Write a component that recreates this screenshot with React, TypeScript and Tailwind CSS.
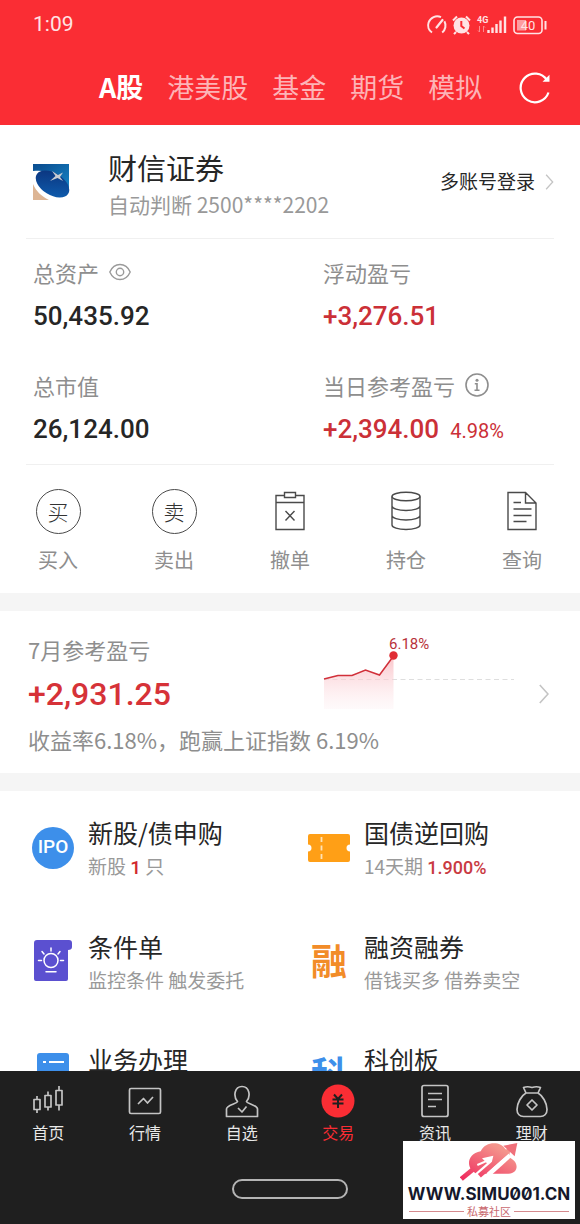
import { useState } from "react";
import type { ReactNode } from "react";

const markets = ["A股", "港美股", "基金", "期货", "模拟"];

function StatusIcons() {
    return (
        <svg width="122" height="22" viewBox="0 0 122 22" fill="none" stroke="#ffe3e4" aria-hidden="true">
            {/* speed meter */}
            <path d="M6 18.500A8.600 8.600 0 0 1 2.600 8.500 9 9 0 0 1 15 3.200M18.400 7.200a9 9 0 0 1-2.200 11.300" strokeWidth="2" />
            <path d="M10.500 13.500 16.500 6" strokeWidth="2.200" strokeLinecap="round" />
            {/* alarm */}
            <circle cx="35.500" cy="11.500" r="8" fill="#ffe3e4" stroke="none" />
            <path d="m27 6.500 4-4M44 6.500l-4-4M30 18l-2 2.200M41 18l2 2.200" strokeWidth="2" />
            <path d="M35.300 7v5l3.200 2.500" stroke="#fa2d34" strokeWidth="2" />
            {/* signal */}
            <text x="51" y="9" fontSize="9" fontWeight="700" fill="#ffe3e4" stroke="none" fontFamily="Roboto, sans-serif">4G</text>
            <path d="M53.500 12v6m-1.500-1.500 1.500 1.500M57.500 18v-6m1.500 1.500-1.500-1.500" stroke="#fc8a8e" strokeWidth="1" />
            <path d="M62.500 19v-3M66.500 19v-5.500M70.500 19v-9M74.500 19V6.500M79 19V2.500" strokeWidth="2.400" />
            {/* battery */}
            <rect x="88" y="3" width="28" height="16.500" rx="3.500" strokeWidth="1.600" />
            <rect x="91" y="6" width="9" height="10.500" fill="#fd9da0" stroke="none" />
            <path d="M119.500 7v8.500" strokeWidth="2" />
            <text x="102" y="16" textAnchor="middle" fontSize="13" fill="#ffe3e4" stroke="none" fontFamily="Roboto, sans-serif">40</text>
        </svg>
    );
}

function RefreshIcon() {
    return (
        <svg width="32" height="32" viewBox="0 0 32 32" fill="none" stroke="#fff" strokeWidth="2.200">
            <path d="M29.500 20.500A14.300 14.300 0 1 1 28 8.200" />
            <path d="M30.500 2.800v7h-7z" fill="#fff" stroke="none" />
        </svg>
    );
}

function Chevron({ className }: { className: string }) {
    return (
        <svg className={className} viewBox="0 0 10 20" fill="none" stroke="#c4c4c4" strokeWidth="1.600" aria-hidden="true">
            <path d="m.8 1 8.200 9-8.200 9" />
        </svg>
    );
}

function BrokerLogo() {
    return (
        <svg width="38" height="36" viewBox="0 0 38 36" aria-hidden="true">
            <defs>
                <linearGradient id="sky" x1="0" y1="0" x2="1" y2="1">
                    <stop offset="0" stopColor="#0a4d90" />
                    <stop offset="1" stopColor="#1683c4" />
                </linearGradient>
                <linearGradient id="orb" x1="0" y1="0" x2="1" y2="1">
                    <stop offset="0" stopColor="#0b2f78" />
                    <stop offset="1" stopColor="#0f62b4" />
                </linearGradient>
            </defs>
            <path d="M0 0h36v24H0z" fill="url(#sky)" />
            <path d="M0 7C14 5 28 11 36 26v10H0z" fill="#fff" />
            <path d="M0 20c3 7 8 12 16 16H0z" fill="#ddb594" />
            <path d="M36 0v24C32 11 18 5 8 7L6 0z" fill="url(#sky)" />
            <ellipse cx="19.500" cy="20" rx="18.500" ry="11" transform="rotate(32 19.500 20)" fill="url(#orb)" />
            <path d="m19 7 6 4 5-2.500-3 4.500 3 4-5.500-3-7.500 3 5.500-5z" fill="#c9ccd2" />
        </svg>
    );
}

function EyeIcon() {
    return (
        <svg width="22" height="18" viewBox="0 0 22 18" fill="none" stroke="#9a9a9a" strokeWidth="1.400">
            <path d="M.8 9C3 4 6.500 1.500 11 1.500S19 4 21.200 9C19 14 15.500 16.500 11 16.500S3 14 .8 9z" />
            <circle cx="11" cy="9" r="3.700" />
        </svg>
    );
}

function InfoIcon() {
    return (
        <svg width="24" height="24" viewBox="0 0 24 24" fill="none" stroke="#8e8e8e" strokeWidth="1.600">
            <circle cx="12" cy="12" r="11" />
            <circle cx="12" cy="7.200" r="1.500" fill="#8e8e8e" stroke="none" />
            <path d="M9.800 10.800H12v6.500M9.500 17.300h5" />
        </svg>
    );
}

function RoundGlyph({ children }: { children: ReactNode }) {
    return (
        <span className="flex size-[45px] items-center justify-center rounded-full border border-[#4a4a4a] text-[21px] leading-none font-light text-[#333]">
            {children}
        </span>
    );
}

const actions = [
    { label: "买入", icon: <RoundGlyph>买</RoundGlyph> },
    { label: "卖出", icon: <RoundGlyph>卖</RoundGlyph> },
    {
        label: "撤单",
        icon: (
            <svg width="30" height="40" viewBox="0 0 30 40" fill="none" stroke="#4a4a4a" strokeWidth="1.400">
                <path d="M9.500 4.500H1v34h28v-34h-8.500M1 11.500h28" />
                <path d="M9.500 1.500h11v5h-11zM10.500 20l9 9.500M19.500 20l-9 9.500" />
            </svg>
        ),
    },
    {
        label: "持仓",
        icon: (
            <svg width="30" height="40" viewBox="0 0 30 40" fill="none" stroke="#4a4a4a" strokeWidth="1.400">
                <ellipse cx="15" cy="5.500" rx="14" ry="4.200" />
                <path d="M1 5.500V34c0 2.500 6 4.500 14 4.500S29 36.500 29 34V5.500M1 15c0 2.500 6 4.500 14 4.500S29 17.500 29 15M1 24.500C1 27 7 29 15 29s14-2 14-4.500" />
            </svg>
        ),
    },
    {
        label: "查询",
        icon: (
            <svg width="30" height="40" viewBox="0 0 30 40" fill="none" stroke="#4a4a4a" strokeWidth="1.400">
                <path d="M18.500 1.500H1v37h28V12zv10.500H29M6.500 11.500H14M6.500 18h18M6.500 24.500h18M6.500 30.500h13" />
            </svg>
        ),
    },
];

const services = [
    {
        title: "新股/债申购",
        note: <>新股 <b className="font-['Roboto',sans-serif] font-medium text-[#d1282e]">1</b> 只</>,
        icon: (
            <span className="flex size-[42px] items-center justify-center rounded-full bg-[#3d8fea] font-['Roboto',sans-serif] text-[19px] font-medium text-white">
                IPO
            </span>
        ),
    },
    {
        title: "国债逆回购",
        note: <>14天期 <b className="font-['Roboto',sans-serif] text-[18px] font-medium text-[#c93a42]">1.900%</b></>,
        icon: (
            <svg width="42" height="28" viewBox="0 0 42 28" aria-hidden="true">
                <path d="M2 0h38q2 0 2 2v8.500a3.500 3.500 0 0 0 0 7V26q0 2-2 2H2q-2 0-2-2v-8.500a3.500 3.500 0 0 0 0-7V2q0-2 2-2z" fill="#ff9f16" />
                <path d="M13.500 3v22" stroke="#ffe2b5" strokeWidth="1.800" strokeDasharray="5 3.500" />
            </svg>
        ),
    },
    {
        title: "条件单",
        note: "监控条件 触发委托",
        icon: (
            <svg width="38" height="42" viewBox="0 0 38 42" fill="none" stroke="#fff" strokeWidth="1.500" strokeLinecap="round" aria-hidden="true">
                <path d="M3 0h32q3 0 3 3v4q0 3-4 3v29q0 2-2 2H2q-2 0-2-2V3q0-3 3-3z" fill="#5b50d0" stroke="none" />
                <circle cx="17" cy="20.500" r="7" />
                <path d="M17 8v3M8 11.500l2 2.500M26 11.500 24 14M4.500 20.500h3M26.500 20.500h3M12 31.700h10" />
            </svg>
        ),
    },
    {
        title: "融资融券",
        note: "借钱买多 借券卖空",
        icon: <span className="pb-1 text-[36px] leading-none font-bold text-[#f28c28]">融</span>,
    },
    {
        title: "业务办理",
        icon: (
            <svg width="32" height="42" viewBox="0 0 32 42" stroke="#fff" strokeWidth="2" aria-hidden="true">
                <rect width="32" height="42" rx="3" fill="#3d8fea" stroke="none" />
                <path d="M6 9h3M12 9h15M6 20h3M12 20h15M6 31h3M12 31h15" />
            </svg>
        ),
    },
    {
        title: "科创板",
        icon: <span className="pb-1 text-[36px] leading-none font-bold text-[#3d8fea]">科</span>,
    },
];

const navItems = [
    {
        label: "首页",
        icon: (
            <>
                <path d="M3 15.500h6v10H3zM14 11.500h6v11.500h-6zM25 6.500h6V21h-6z" />
                <path d="M6 12v3.500M6 25.500V29M17 7.500v4M17 23v3.500M28 2v4.500M28 21v5.500" />
            </>
        ),
    },
    {
        label: "行情",
        icon: (
            <>
                <rect x="1.500" y="4.500" width="31" height="25" rx="1.500" />
                <path d="m10 20 5.500-5.500 4 4.500 5.500-6" />
            </>
        ),
    },
    {
        label: "自选",
        icon: (
            <>
                <path d="M12.500 17.500C8 12 9.500 2.500 17 2.500S26 12 21.500 17.500c1 2.500 11 3.500 11 7.500v7.500h-31V25c0-4 10-5 11-7.500z" />
                <path d="m13 24 4 4 4.500-5.500" />
            </>
        ),
    },
    {
        label: "交易",
        icon: (
            <>
                <circle cx="17" cy="17" r="16.500" fill="#fa2d34" stroke="none" />
                <path d="m13 10.500 4 4.500 4-4.500M11.500 15.500h11M11.500 19.500h11M17 15v9" stroke="#1f1f1f" strokeWidth="2" />
            </>
        ),
    },
    {
        label: "资讯",
        icon: (
            <>
                <rect x="4" y="1.500" width="26" height="31" rx="2" />
                <path d="M10 9.500h14M10 15.500h14M10 22.500h8" />
            </>
        ),
    },
    {
        label: "理财",
        icon: (
            <>
                <path d="M11 9 8.500 3.500q4-1.500 8.500 0 4.500-1.500 8.500 0L23 9zC6.500 11.500 2 19 2 25.500c0 4.500 3 7 6.500 7h17c3.500 0 6.500-2.500 6.500-7C32 19 27.500 11.500 23 9" />
                <path d="m17 16 5 5-5 5-5-5z" />
            </>
        ),
    },
];

function TrendChart() {
    return (
        <svg width="200" height="82" viewBox="0 0 200 82" fill="none" className="shrink-0" role="img" aria-label="7月收益走势">
            <defs>
                <linearGradient id="fade" x1="0" y1="0" x2="0" y2="1">
                    <stop offset="0" stopColor="#f9b6bc" stopOpacity="0.8" />
                    <stop offset="1" stopColor="#fdeef1" stopOpacity="0.3" />
                </linearGradient>
            </defs>
            <path d="M4 46.500h190" stroke="#dedede" strokeDasharray="5 3.500" />
            <path d="M4 46 18 42.500h14L45.500 37 59.500 42 73.500 23v53H4z" fill="url(#fade)" />
            <path d="M4 46 18 42.500h14L45.500 37 59.500 42 73.500 23" stroke="#d1303a" strokeWidth="1.500" />
            <circle cx="73.500" cy="22.500" r="4.200" fill="#e02d34" />
            <text x="69" y="16" fontSize="15" fill="#b8323a" fontFamily="Roboto, sans-serif">6.18%</text>
        </svg>
    );
}

function SiteBadge() {
    return (
        <div className="absolute right-[5px] bottom-[5px] flex w-[172px] flex-col items-center overflow-hidden bg-white pt-[2px] pb-[2px]">
            <svg width="58" height="40" viewBox="0 0 174 120" aria-hidden="true">
                <defs>
                    <linearGradient id="cloud" gradientUnits="userSpaceOnUse" x1="30" y1="115" x2="90" y2="0">
                        <stop offset="0" stopColor="#ef2f60" />
                        <stop offset="1" stopColor="#f4958c" />
                    </linearGradient>
                </defs>
                <path d="M34 80C20 62 26 32 62 25 76-6 122-6 136 18c12 6 16 18 14 26 28 14 26 46-4 48H48z" fill="url(#cloud)" />
                {/* small arrow, white head inside the cloud */}
                <path d="M4 108 60 62" stroke="url(#cloud)" strokeWidth="14" />
                <path d="M22 118 86 62" stroke="#fff" strokeWidth="9" />
                <path d="M52 66 84 52" stroke="#fff" strokeWidth="6" />
                <path d="M66 46 100 38 92 72z" fill="#fff" />
                {/* large arrow leaving the cloud */}
                <path d="M84 96 150 36" stroke="#fff" strokeWidth="14" />
                <path d="M58 98 154 16" stroke="url(#cloud)" strokeWidth="14" />
                <path d="M130 8 172 0l-8 40z" fill="#f0707a" />
            </svg>
            <span className="font-['Inter',sans-serif] text-[17px] leading-[22px] font-bold whitespace-nowrap text-[#15172b] slashed-zero">
                WWW.SIMU001.CN
            </span>
            <div className="flex w-full items-center gap-[3px] px-[6px] text-[11px] leading-[12px] text-[#c96a70]">
                <span className="h-px flex-1 bg-[#d58a8e]" />
                私募社区
                <span className="h-px flex-1 bg-[#d58a8e]" />
            </div>
        </div>
    );
}

export default function App() {
    const [market, setMarket] = useState("A股");
    const [page, setPage] = useState("交易");
    const [visible, setVisible] = useState(true);

    const money = (value: string) => (visible ? value : "****");

    return (
        <div className="flex h-screen flex-col bg-white font-['Noto_Sans_CJK_SC',sans-serif] text-[#262626]">
            <header className="shrink-0 bg-[#fa2d34]">
                <div className="flex h-[50px] items-center justify-between pr-[32px] pl-[33px]">
                    <span className="font-['Roboto',sans-serif] text-[21px] text-[#ffe3e4]">1:09</span>
                    <StatusIcons />
                </div>
                <div className="flex h-[75px] items-center justify-between pr-[29px] pl-[99px]">
                    <nav className="flex gap-[24px] pb-[2px] text-[27px] leading-[36px] whitespace-nowrap">
                        {markets.map((item) => (
                            <button
                                key={item}
                                type="button"
                                onClick={() => setMarket(item)}
                                className={item === market ? "font-bold text-white" : "text-[#fdb4b7]"}
                            >
                                {item}
                            </button>
                        ))}
                    </nav>
                    <button type="button" aria-label="刷新">
                        <RefreshIcon />
                    </button>
                </div>
            </header>

            <main className="min-h-0 flex-1 overflow-y-auto [scrollbar-width:none]">
                <section>
                    <div className="flex h-[113px] items-center pr-[26px] pl-[33px]">
                        <BrokerLogo />
                        <div className="ml-[37px] flex-1 pt-[9px]">
                            <h1 className="text-[29px] leading-[37px]">财信证券</h1>
                            <p className="text-[21px] leading-[37px] text-[#999]">自动判断 2500****2202</p>
                        </div>
                        <button type="button" className="flex items-center gap-[10px] text-[19px]">
                            多账号登录
                            <Chevron className="h-[16px] w-[9px]" />
                        </button>
                    </div>
                    <hr className="mx-[26px] border-[#f0f0f0]" />

                    <dl className="grid grid-cols-2 gap-y-[36px] pt-[18px] pb-[15px] *:pl-[33px]">
                        <div>
                            <dt className="flex h-[30px] items-center gap-[10px] text-[22px] text-[#8e8e8e]">
                                总资产
                                <button type="button" aria-label="显示或隐藏金额" onClick={() => setVisible(!visible)}>
                                    <EyeIcon />
                                </button>
                            </dt>
                            <dd className="mt-[11px] font-['Roboto',sans-serif] text-[26px] leading-[36px] font-medium">{money("50,435.92")}</dd>
                        </div>
                        <div>
                            <dt className="flex h-[30px] items-center text-[22px] text-[#8e8e8e]">浮动盈亏</dt>
                            <dd className="mt-[11px] font-['Roboto',sans-serif] text-[26px] leading-[36px] font-medium text-[#cb3037]">{money("+3,276.51")}</dd>
                        </div>
                        <div>
                            <dt className="flex h-[30px] items-center text-[22px] text-[#8e8e8e]">总市值</dt>
                            <dd className="mt-[11px] font-['Roboto',sans-serif] text-[26px] leading-[36px] font-medium">{money("26,124.00")}</dd>
                        </div>
                        <div>
                            <dt className="flex h-[30px] items-center gap-[10px] text-[22px] text-[#8e8e8e]">
                                当日参考盈亏
                                <button type="button" aria-label="说明">
                                    <InfoIcon />
                                </button>
                            </dt>
                            <dd className="mt-[11px] font-['Roboto',sans-serif] text-[26px] leading-[36px] font-medium text-[#cb3037]">
                                {money("+2,394.00")}
                                <span className="ml-[11px] text-[20px] font-normal">4.98%</span>
                            </dd>
                        </div>
                    </dl>
                    <hr className="mx-[26px] border-[#f0f0f0]" />

                    <div className="grid grid-cols-5 pt-[23px] pb-[18px]">
                        {actions.map((action) => (
                            <button key={action.label} type="button" className="flex flex-col items-center">
                                <span className="flex h-[46px] items-center">{action.icon}</span>
                                <span className="mt-[11px] text-[20px] leading-[30px] text-[#8e8e8e]">{action.label}</span>
                            </button>
                        ))}
                    </div>
                </section>

                <section className="flex items-center border-t-[18px] border-[#f5f5f5] pt-[22px] pr-[31px] pb-[18px] pl-[28px]">
                    <div className="flex-1">
                        <div className="flex justify-between">
                            <div>
                                <h2 className="text-[22px] leading-[32px] text-[#8e8e8e]">7月参考盈亏</h2>
                                <p className="mt-[7px] font-['Roboto',sans-serif] text-[32px] leading-[44px] font-medium text-[#d63238]">{money("+2,931.25")}</p>
                            </div>
                            <TrendChart />
                        </div>
                        <p className="mt-[7px] text-[22px] leading-[32px] text-[#8e8e8e]">收益率6.18%，跑赢上证指数 6.19%</p>
                    </div>
                    <button type="button" aria-label="查看收益详情" className="ml-[19px]">
                        <Chevron className="h-[20px] w-[10px]" />
                    </button>
                </section>

                <section className="grid grid-cols-2 border-t-[18px] border-[#f5f5f5] px-[14px]">
                    {services.map((service) => (
                        <button key={service.title} type="button" className="flex h-[113px] items-center gap-[14px] pl-[18px] text-left">
                            <span className="flex w-[42px] shrink-0 justify-center">{service.icon}</span>
                            <span className="min-h-[64px]">
                                <span className="block text-[25px] leading-[34px]">{service.title}</span>
                                {service.note && (
                                    <span className="mt-1 block text-[19px] leading-[26px] text-[#999]">{service.note}</span>
                                )}
                            </span>
                        </button>
                    ))}
                </section>
            </main>

            <footer className="relative shrink-0 bg-[#1f1f1f] pt-[13px] pb-[25px]">
                <nav className="grid grid-cols-6">
                    {navItems.map((item) => (
                        <button
                            key={item.label}
                            type="button"
                            onClick={() => setPage(item.label)}
                            className={item.label === page ? "flex flex-col items-center text-[#fa2d34]" : "flex flex-col items-center text-[#e8e8e8]"}
                        >
                            <svg width="34" height="34" viewBox="0 0 34 34" fill="none" stroke="#c4c4c4" strokeWidth="1.700" strokeLinejoin="round">
                                {item.icon}
                            </svg>
                            <span className="mt-1 text-[16px] leading-[20px]">{item.label}</span>
                        </button>
                    ))}
                </nav>
                <div className="mx-auto mt-[37px] h-[20px] w-[116px] rounded-full border-2 border-[#b4b4b4]" />
                <SiteBadge />
            </footer>
        </div>
    );
}
